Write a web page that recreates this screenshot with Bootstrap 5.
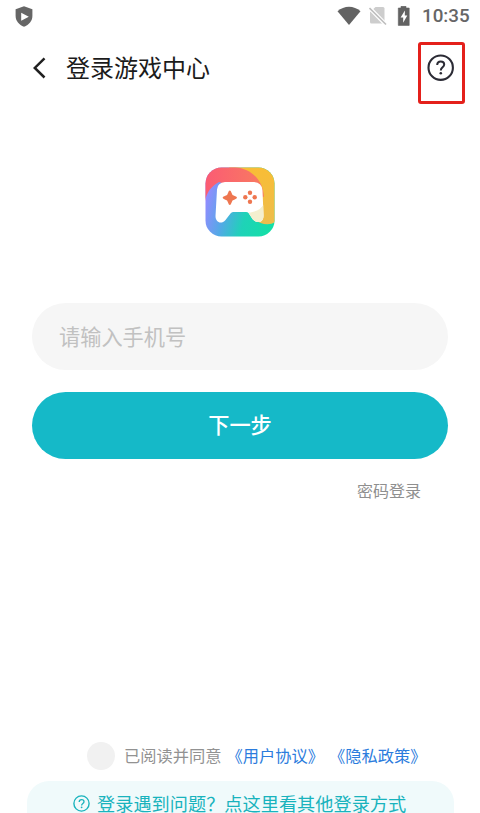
<!DOCTYPE html>
<html lang="zh-CN">
<head>
<meta charset="utf-8">
<meta name="viewport" content="width=device-width, initial-scale=1">
<title>登录游戏中心</title>
<link href="https://cdn.jsdelivr.net/npm/bootstrap@5.3.0/dist/css/bootstrap.min.css" rel="stylesheet">
<style>
  body { font-family: "Noto Sans CJK SC", sans-serif; background: #fff; color: #1b1b1b; line-height: 1; }
  svg { display: block; flex: none; }
  .screen { height: 813px; }
  .status { height: 32px; padding: 0 11px 0 15px; }
  .clock { font: 500 18.800px/33px Roboto, sans-serif; color: #666; margin-left: 10px; width: 47px; white-space: nowrap; padding-top: 1px; }
  .topbar { height: 73px; padding: 10px 15px 0 32px; }
  .title { font-size: 24px; font-weight: 400; line-height: 50px; margin-left: 19px; }
  .help { width: 47px; height: 62px; border: 3px solid #e4201b; border-radius: 3px; padding: 9px 1px 0 0; background: transparent; }
  .logo { margin-top: 62px; }
  .form-area { padding: 66px 32px 0; }
  .phone, .phone:focus { height: 67px; background: #f6f6f6; font-size: 21.2px; padding: 0 27px 2px; box-shadow: none; }
  .phone::placeholder { color: #c1c1c1; opacity: 1; }
  .next, .next:hover { height: 66.5px; margin-top: 22px; background: #15b9c8; color: #fff; font-size: 21.2px; font-weight: 500; border: 0; padding: 0 0 2px; }
  .alt { color: #8f8f8f; font-size: 16px; line-height: 24px; margin: 19px 27px 0 0; }
  .agree { height: 28px; padding-left: 87px; font-size: 16.25px; color: #929292; margin-bottom: 11px; white-space: nowrap; }
  .agree label { padding: 0 5px 2px 9px; }
  .agree a { color: #2b7cdd; padding-bottom: 2px; }
  .agree a + a { margin-left: 5px; }
  .agree-check, .agree-check:focus { width: 28px; height: 28px; border: 0; background-color: #f1f1f1; box-shadow: none; }
  .banner { height: 32px; margin: 0 26px 0 27px; border-radius: 22px 22px 0 0; background: #f0fafb; color: #19b3bd; font-size: 18.2px; padding: 13px 0 0 46px; white-space: nowrap; }
  .banner svg { margin-right: 7px; }
</style>
</head>
<body>
<div class="screen d-flex flex-column overflow-hidden">
  <div class="status d-flex align-items-center">
    <svg width="18" height="21" viewBox="0 0 18 21"><path d="M9 .3 17.4 3.3V10c0 5-3.400 8.900-8.400 10.700C4 18.900.600 15 .600 10V3.300Z" fill="#666"/><path d="M6.200 6.700v8l7.600-4z" fill="#fff"/></svg>
    <svg class="ms-auto" width="24" height="20" viewBox="0 0 24 20"><path d="M.5 5.200C7-.9 17-.9 23.500 5.200L12 19Z" fill="#636363"/></svg>
    <svg class="ms-2" width="18" height="20" viewBox="0 0 18 20"><path d="M6.500 1H14q1.500 0 1.500 1.500V17.500H2.500Q1 17.500 1 16V6Z" fill="#cdcdcd"/><path d="M0 1.500 17 18.800" stroke="#fff" stroke-width="4"/><path d="M.5 2 17 18.500" stroke="#bdbdbd" stroke-width="1.600"/></svg>
    <svg class="ms-2" width="17" height="20" viewBox="0 0 17 20"><path d="M3.300 2H6V.3h5V2h3.200v17.400H3.300z" fill="#626262" stroke="#626262" stroke-width=".6" stroke-linejoin="round"/><path d="M9.900 4.500 5.600 11.500H8.200v5.300l4.100-7.300H9.800z" fill="#fff"/></svg>
    <div class="clock">10:35</div>
  </div>
  <header class="topbar d-flex align-items-start">
    <svg width="15" height="52" viewBox="0 0 15 52"><path d="M12.500 16.300 2.800 25.900 12.500 35.500" fill="none" stroke="#202020" stroke-width="2.500"/></svg>
    <h1 class="title mb-0">登录游戏中心</h1>
    <button class="help ms-auto d-flex justify-content-center align-items-start" aria-label="帮助">
      <svg width="28" height="28" viewBox="0 0 28 28" fill="none"><circle cx="13.700" cy="13.700" r="12.200" stroke="#2b2b35" stroke-width="2.100"/><path d="M10.200 11c0-2.300 1.300-3.500 3.500-3.500s3.500 1.200 3.500 3.100c0 2.700-3.400 2.800-3.400 5.800" stroke="#2b2b35" stroke-width="2"/><circle cx="13.800" cy="19.300" r="1.300" fill="#2b2b35"/></svg>
    </button>
  </header>
  <div class="logo d-flex justify-content-center">
    <svg width="70" height="70" viewBox="0 0 70 70">
      <defs>
        <clipPath id="tile"><rect x=".5" y=".5" width="69" height="69" rx="16"/></clipPath>
        <linearGradient id="teal" x1="0" y1=".5" x2="1" y2=".75"><stop offset="0" stop-color="#928bff"/><stop offset=".3" stop-color="#51aae5"/><stop offset=".58" stop-color="#1fd2b8"/><stop offset="1" stop-color="#13e0a5"/></linearGradient>
        <linearGradient id="rose" x1="0" y1="0" x2="1" y2="0"><stop offset="0" stop-color="#fb5b74"/><stop offset="1" stop-color="#f87b60"/></linearGradient>
        <linearGradient id="gold" x1="0" y1="0" x2="0" y2="1"><stop offset="0" stop-color="#f9bd35"/><stop offset="1" stop-color="#edbd4c"/></linearGradient>
      </defs>
      <g clip-path="url(#tile)">
        <path d="M0 0h70v70H0z" fill="url(#teal)"/>
        <path d="M24 0H70V55C64 59 54 58 46 49L36 24Z" fill="url(#gold)"/>
        <path d="M0 0H30C46 2 58 12 59 30L14 15C7 19 2 24 0 34Z" fill="url(#rose)"/>
      </g>
      <path d="M20 15H49Q57 15.500 57.500 23.500L58.500 48C59 57 50 57 46.500 50.500L43.500 46Q42.800 45 41 45H28Q26.500 45 25.500 46.500L20.500 53C16 58 10.500 55 10.500 49L12 22.500Q12.500 15.500 20 15Z" fill="#fff"/>
      <path d="M43.500 45.500C51 45 56 42 58.200 38L58.500 48C59 57 50 57 46.500 50.500Z" fill="#f4efcf"/>
      <path d="M24.800 23.500q1 0 1.700 2.200l1 2.300 2.300 1q2.200.800 2.200 1.700t-2.200 1.700l-2.300 1-1 2.300q-.700 2.200-1.700 2.200t-1.700-2.200l-1-2.300-2.300-1q-2.200-.800-2.200-1.700t2.200-1.700l2.300-1 1-2.300q.700-2.200 1.700-2.200" fill="#ee7650"/>
      <g fill="#ee7650"><circle cx="45" cy="25.800" r="2.200"/><circle cx="40.300" cy="30.300" r="2.200"/><circle cx="49.700" cy="30.300" r="2.200"/><circle cx="45" cy="34.800" r="2.200"/></g>
    </svg>
  </div>
  <main class="form-area d-flex flex-column">
    <input class="phone form-control border-0 rounded-pill" type="tel" placeholder="请输入手机号">
    <button class="next btn rounded-pill w-100">下一步</button>
    <a class="alt align-self-end text-decoration-none" href="#">密码登录</a>
  </main>
  <div class="agree mt-auto d-flex align-items-center">
    <input class="agree-check form-check-input rounded-circle m-0 flex-shrink-0" type="checkbox" id="consent">
    <label for="consent">已阅读并同意</label>
    <a class="text-decoration-none" href="#">《用户协议》</a>
    <a class="text-decoration-none" href="#">《隐私政策》</a>
  </div>
  <div class="banner d-flex align-items-start flex-shrink-0">
    <svg width="17" height="19" viewBox="0 0 17 19" fill="none"><circle cx="8.500" cy="9.500" r="7.600" stroke="#19b3bd" stroke-width="1.400"/><path d="M6.200 8c0-1.500 1-2.400 2.400-2.400S11 6.400 11 7.700c0 1.700-2.400 1.800-2.400 3.700" stroke="#19b3bd" stroke-width="1.300"/><circle cx="8.600" cy="13.300" r=".9" fill="#19b3bd"/></svg>
    <span>登录遇到问题？点这里看其他登录方式</span>
  </div>
</div>
<script src="https://cdn.jsdelivr.net/npm/bootstrap@5.3.0/dist/js/bootstrap.bundle.min.js"></script>
</body>
</html>
